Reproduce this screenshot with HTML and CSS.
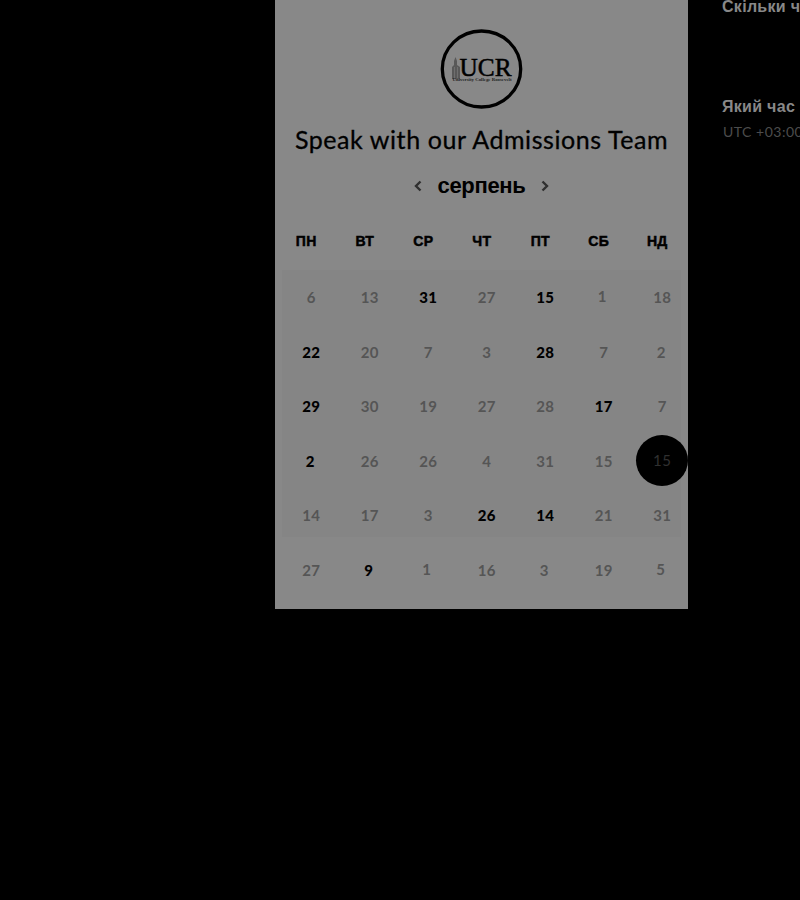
FILE: index.html
```html
<!DOCTYPE html>
<html lang="uk">
<head>
<meta charset="utf-8">
<title>Speak with our Admissions Team</title>
<link rel="stylesheet" href="styles.css">
</head>
<body>
<main class="page">
  <section class="panel">
    <svg class="logo" width="84" height="82" viewBox="0 0 84 82">
      <ellipse cx="41.500" cy="41" rx="39.200" ry="38" fill="none" stroke="#000" stroke-width="3.300"/>
      <path d="M12 51V39l2-2v-4l1.500-4 1.500 4v4l3 2v12z" fill="#585858"/>
      <path d="M14.500 39v11M17.500 39v11" stroke="#757575" stroke-width=".8"/>
      <text class="logo-name" x="19.500" y="48" textLength="52" lengthAdjust="spacingAndGlyphs">UCR</text>
      <text class="logo-sub" x="12.500" y="53" textLength="59" lengthAdjust="spacingAndGlyphs">University College Roosevelt</text>
    </svg>
    <h1 class="title">Speak with our Admissions Team</h1>
    <div class="month">
      <svg width="8" height="12" viewBox="0 0 8 12"><path d="M6.500 1.500L2 6l4.500 4.500"/></svg>
      <h2 class="month-name">серпень</h2>
      <svg width="8" height="12" viewBox="0 0 8 12"><path d="M1.500 1.500L6 6l-4.500 4.500"/></svg>
    </div>
    <div class="weekdays">
      <span>ПН</span><span>ВТ</span><span>СР</span><span>ЧТ</span><span>ПТ</span><span>СБ</span><span>НД</span>
    </div>
    <div class="days">
      <span>6</span><span>13</span><b>31</b><span>27</span><b>15</b><span class="raised">1</span><span>18</span>
      <b>22</b><span>20</span><span>7</span><span>3</span><b>28</b><span>7</span><span class="left">2</span>
      <b>29</b><span>30</span><span>19</span><span>27</span><span>28</span><b>17</b><span>7</span>
      <b class="left">2</b><span>26</span><span>26</span><span>4</span><span>31</span><span>15</span><span class="selected"><i>15</i></span>
      <span>14</span><span>17</span><span>3</span><b>26</b><b>14</b><span>21</span><span>31</span>
      <span>27</span><b class="left">9</b><span class="raised">1</span><span>16</span><span class="left">3</span><span>19</span><span class="raised">5</span>
    </div>
  </section>
  <aside class="details">
    <h3 class="question duration">Скільки часу вам потрібно?</h3>
    <h3 class="question">Який час вам підходить?</h3>
    <p class="zone">UTC +03:00</p>
  </aside>
</main>
</body>
</html>
```
FILE: styles.css
```css
* { box-sizing: border-box; }
body { margin: 0; background: #000; overflow: hidden; font-family: "Liberation Sans", sans-serif; }
h1, h2, h3, p { margin: 0; }

.page { display: flex; height: 900px; padding-left: 275px; overflow: hidden; }

.panel {
  flex: none;
  display: flex;
  flex-direction: column;
  align-items: center;
  width: 413px;
  height: 609px;
  padding-top: 28px;
  background: #888;
}
.logo { display: block; flex: none; }
.logo-name { font: 25px "Liberation Serif", serif; stroke: #000; stroke-width: .5px; }
.logo-sub { font: bold 4.5px "Liberation Serif", serif; fill: #222; }

.title {
  height: 30px;
  margin-top: 14px;
  font: 400 25px/30px Lato, sans-serif;
  letter-spacing: .57px;
  white-space: nowrap;
  -webkit-text-stroke: .3px #000;
}

.month { display: flex; align-items: center; gap: 16px; height: 30px; margin-top: 17px; }
.month svg { fill: none; stroke: #303030; stroke-width: 2.4; }
.month-name { font-size: 22px; line-height: 30px; letter-spacing: -.35px; }

.weekdays, .days { display: grid; grid-template-columns: repeat(7, 58.5px); align-self: flex-start; text-align: center; }
.weekdays {
  margin: 30px 0 0 2px;
  font-size: 14px;
  font-weight: 700;
  line-height: 20px;
  letter-spacing: .3px;
  -webkit-text-stroke: .5px #000;
}
.days {
  grid-auto-rows: 54.5px;
  align-items: center;
  margin: 19px 0 0 7px;
  background: linear-gradient(#858585, #858585) 0 0 / 399px 267px no-repeat;
  color: #555;
  font: 700 15px/20px Lato, sans-serif;
  letter-spacing: .2px;
}
.days b { color: #000; font-weight: 900; }
.left { position: relative; left: -1px; }
.raised { position: relative; left: -1.500px; top: -1px; }
.selected {
  justify-self: center;
  width: 52px;
  height: 51px;
  border-radius: 50%;
  background: #000;
  color: #303030;
  font-weight: 400;
  line-height: 50px;
}
.selected i { font-style: normal; letter-spacing: .5px; }

.details { flex: none; width: 260px; padding-left: 34px; white-space: nowrap; }
.question { color: #888; font-size: 16px; line-height: 20px; letter-spacing: .3px; }
.duration { margin-top: -3px; margin-bottom: 80px; }
.zone { margin: 5px 0 0 1px; color: #4c4c4c; font: 14px/20px Lato, sans-serif; letter-spacing: .5px; }
```
